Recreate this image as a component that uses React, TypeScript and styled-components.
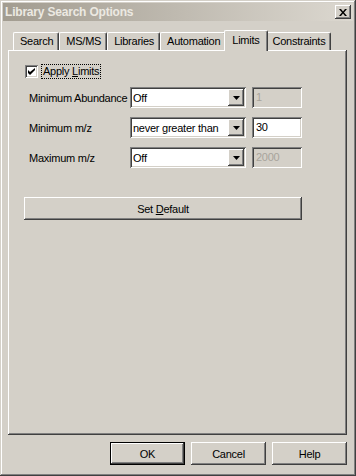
import React from "react";
import styled, { createGlobalStyle, css } from "styled-components";

const Global = createGlobalStyle`
  html, body { margin: 0; padding: 0; background: #d4d0c8; }
  * { box-sizing: border-box; }
  body { font-family: "Liberation Sans", Arial, sans-serif; font-size: 11px; color: #000; letter-spacing: -0.25px; }
`;

const raised = css`
  box-shadow: inset -1px -1px #404040, inset 1px 1px #ffffff, inset -2px -2px #808080, inset 2px 2px #d4d0c8;
`;

const sunken = css`
  box-shadow: inset 1px 1px #808080, inset -1px -1px #ffffff, inset 2px 2px #404040, inset -2px -2px #d4d0c8;
`;

const Window = styled.div`
  width: 356px;
  height: 476px;
  padding: 3px;
  background: #d4d0c8;
  display: flex;
  flex-direction: column;
  box-shadow: inset -1px -1px #404040, inset 1px 1px #d4d0c8, inset -2px -2px #808080, inset 2px 2px #ffffff;
`;

const TitleBar = styled.div`
  height: 18px;
  display: flex;
  align-items: center;
  justify-content: space-between;
  padding: 0 2px 0 2px;
  background: linear-gradient(to right, #a29c90, #dcd8d0);
`;

const Title = styled.span`
  font-family: "Liberation Sans", Arial, sans-serif;
  font-weight: bold;
  font-size: 12px;
  color: #ece9e2;
  letter-spacing: -0.2px;
`;

const CloseButton = styled.div`
  width: 16px;
  height: 14px;
  background: #d4d0c8;
  ${raised};
  display: flex;
  align-items: center;
  justify-content: center;
`;

const Body = styled.div`
  flex: 1;
  display: flex;
  flex-direction: column;
  padding: 9px 6px 8px 5px;
`;

const TabStrip = styled.div`
  height: 20px;
  display: flex;
  align-items: flex-end;
  padding-left: 5px;
  position: relative;
  z-index: 1;
`;

const Tab = styled.div<{ $active?: boolean }>`
  height: ${(p) => (p.$active ? "21px" : "18px")};
  padding: ${(p) => (p.$active ? "3px 7px 0 7px" : "2px 5px 0 6px")};
  margin: ${(p) => (p.$active ? "0 -2px -1px -2px" : "0")};
  background: #d4d0c8;
  border-top: 1px solid #ffffff;
  border-left: 1px solid #ffffff;
  border-right: 1px solid #404040;
  box-shadow: inset -1px 0 #808080;
  border-radius: 2px 2px 0 0;
  white-space: nowrap;
  font-size: 11px;
  line-height: 13px;
  position: relative;
  z-index: ${(p) => (p.$active ? 2 : 0)};
`;

const Panel = styled.div`
  flex: 1;
  background: #d4d0c8;
  ${raised};
  padding: 14px 16px 0 17px;
  display: flex;
  flex-direction: column;
`;

const CheckRow = styled.label`
  display: flex;
  align-items: center;
  gap: 4px;
  height: 14px;
`;

const CheckBox = styled.span`
  width: 13px;
  height: 13px;
  background: #fff;
  ${sunken};
  display: flex;
  align-items: center;
  justify-content: center;
`;

const FocusLabel = styled.span`
  outline: 1px dotted #000;
  outline-offset: 0;
  padding: 0 1px;
  line-height: 13px;
`;

const Grid = styled.div`
  margin-top: 9px;
  margin-left: 4px;
  display: grid;
  grid-template-columns: 95px 116px 50px;
  grid-auto-rows: 21px;
  column-gap: 6px;
  row-gap: 9px;
  align-items: center;
`;

const Label = styled.span`
  white-space: nowrap;
`;

const Select = styled.div`
  height: 21px;
  background: #fff;
  ${sunken};
  display: flex;
  align-items: center;
  padding: 2px 2px 2px 3px;
`;

const SelectText = styled.span`
  flex: 1;
  white-space: nowrap;
  overflow: hidden;
`;

const DropButton = styled.span`
  width: 16px;
  height: 17px;
  background: #d4d0c8;
  ${raised};
  display: flex;
  align-items: center;
  justify-content: center;
`;

const Field = styled.div<{ $disabled?: boolean }>`
  height: 21px;
  ${sunken};
  background: ${(p) => (p.$disabled ? "#d4d0c8" : "#ffffff")};
  color: ${(p) => (p.$disabled ? "#a8a49c" : "#000")};
  padding: 3px 4px;
  line-height: 14px;
`;

const Button = styled.div<{ $default?: boolean }>`
  height: 23px;
  display: flex;
  align-items: center;
  justify-content: center;
  background: #d4d0c8;
  ${(p) =>
    p.$default
      ? css`
          border: 1px solid #000;
          box-shadow: inset -1px -1px #404040, inset 1px 1px #ffffff, inset -2px -2px #808080, inset 2px 2px #d4d0c8;
        `
      : raised};
`;

const WideButton = styled(Button)`
  margin-top: 29px;
  margin-left: -1px;
  width: 278px;
`;

const ButtonRow = styled.div`
  display: flex;
  justify-content: flex-end;
  gap: 6px;
  margin-top: 7px;
  padding-right: 0;
`;

const DialogButton = styled(Button)`
  width: 75px;
`;

const Arrow = () => (
  <svg width="7" height="4" viewBox="0 0 7 4">
    <path d="M0 0h7L3.5 4z" fill="#000" />
  </svg>
);

const Rows = [
  { label: "Minimum Abundance", value: "Off", field: "1", disabled: true },
  { label: "Minimum m/z", value: "never greater than", field: "30", disabled: false },
  { label: "Maximum m/z", value: "Off", field: "2000", disabled: true },
];

export default function App() {
  const tabs = ["Search", "MS/MS", "Libraries", "Automation", "Limits", "Constraints"];
  return (
    <>
      <Global />
      <Window>
        <TitleBar>
          <Title>Library Search Options</Title>
          <CloseButton>
            <svg width="8" height="7" viewBox="0 0 8 7">
              <path d="M0 0h2l2 2.5L6 0h2L5 3.5 8 7H6L4 4.5 2 7H0l3-3.5z" fill="#000" />
            </svg>
          </CloseButton>
        </TitleBar>
        <Body>
          <TabStrip>
            {tabs.map((t) => (
              <Tab key={t} $active={t === "Limits"}>
                {t}
              </Tab>
            ))}
          </TabStrip>
          <Panel>
            <CheckRow>
              <CheckBox>
                <svg width="7" height="7" viewBox="0 0 7 7">
                  <path d="M0 2v3l2 2 5-5V0L2 4z" fill="#000" />
                </svg>
              </CheckBox>
              <FocusLabel>
                Apply <u>L</u>imits
              </FocusLabel>
            </CheckRow>
            <Grid>
              {Rows.map((r) => (
                <React.Fragment key={r.label}>
                  <Label>{r.label}</Label>
                  <Select>
                    <SelectText>{r.value}</SelectText>
                    <DropButton>
                      <Arrow />
                    </DropButton>
                  </Select>
                  <Field $disabled={r.disabled}>{r.field}</Field>
                </React.Fragment>
              ))}
            </Grid>
            <WideButton>
              Set&nbsp;<u>D</u>efault
            </WideButton>
          </Panel>
          <ButtonRow>
            <DialogButton $default>OK</DialogButton>
            <DialogButton>Cancel</DialogButton>
            <DialogButton>Help</DialogButton>
          </ButtonRow>
        </Body>
      </Window>
    </>
  );
}
